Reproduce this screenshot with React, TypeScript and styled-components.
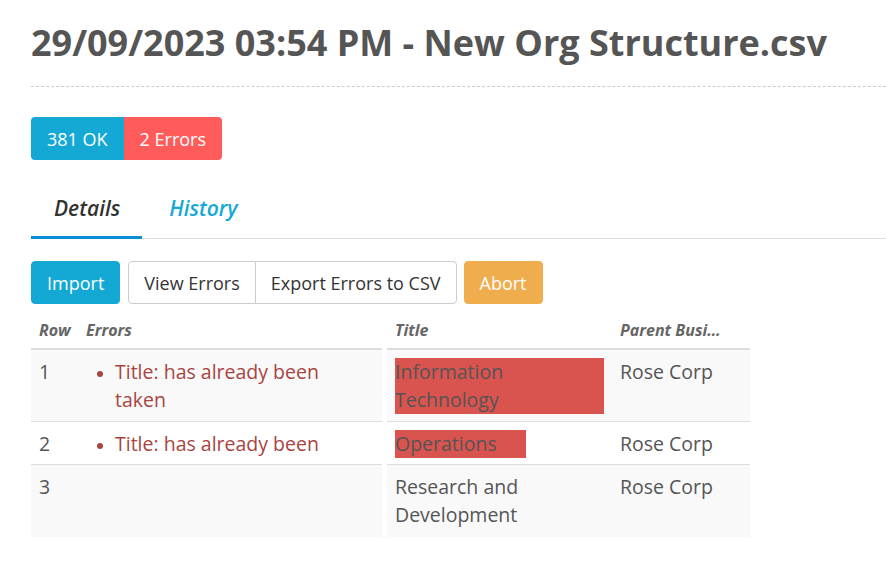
import React from "react";
import styled, { createGlobalStyle } from "styled-components";

const Global = createGlobalStyle`
  html, body { margin: 0; padding: 0; background: #fff; }
  body { font-family: "Open Sans", "Liberation Sans", sans-serif; color: #555; }
  * { box-sizing: border-box; }
`;

const Page = styled.div`
  padding-left: 31px;
  width: 886px;
  overflow: hidden;
`;

const Header = styled.div`
  padding-top: 21px;
  padding-bottom: 21px;
  border-bottom: 1px dashed #ccc;
`;

const Title = styled.h1`
  margin: 0;
  font-size: 36px;
  line-height: 44px;
  font-weight: 700;
  color: #555;
  white-space: nowrap;
`;

const Badges = styled.div`
  display: flex;
  margin-top: 30px;
`;

const Badge = styled.span<{ $tone: "ok" | "err"; $first?: boolean }>`
  height: 43px;
  display: flex;
  align-items: center;
  padding: 0 16px;
  font-size: 18px;
  color: #fff;
  background: ${(p) => (p.$tone === "ok" ? "#14a9d5" : "#ff5b5b")};
  border-radius: ${(p) => (p.$first ? "4px 0 0 4px" : "0 4px 4px 0")};
`;

const Tabs = styled.div`
  display: flex;
  margin-top: 20px;
  border-bottom: 1px solid #ddd;
`;

const Tab = styled.div<{ $active?: boolean }>`
  height: 59px;
  display: flex;
  align-items: center;
  padding: 0 22px 0 23px;
  margin-right: 4px;
  font-size: 21px;
  font-weight: 600;
  font-style: italic;
  color: ${(p) => (p.$active ? "#333" : "#14a9d5")};
  border-bottom: 3px solid ${(p) => (p.$active ? "#0a8fd6" : "transparent")};
  margin-bottom: -1px;
`;

const Toolbar = styled.div`
  display: flex;
  gap: 8px;
  margin-top: 22px;
`;

const Btn = styled.button<{ $variant: "primary" | "default" | "warning" }>`
  height: 43px;
  padding: 0 15px;
  font-family: inherit;
  font-size: 18px;
  border-radius: 4px;
  cursor: pointer;
  border: 1px solid
    ${(p) =>
      p.$variant === "primary" ? "#14a9d5" : p.$variant === "warning" ? "#f0ad4e" : "#ccc"};
  background: ${(p) =>
    p.$variant === "primary" ? "#14a9d5" : p.$variant === "warning" ? "#f0ad4e" : "#fff"};
  color: ${(p) => (p.$variant === "default" ? "#333" : "#fff")};
`;

const Group = styled.div`
  display: flex;
  margin-right: -1px;
  & > ${Btn}:first-child { border-radius: 4px 0 0 4px; }
  & > ${Btn}:last-child { border-radius: 0 4px 4px 0; margin-left: -1px; }
`;

const Tables = styled.div`
  display: flex;
  gap: 5px;
  margin-top: 8px;
`;

const Table = styled.div<{ $width: number }>`
  width: ${(p) => p.$width}px;
  display: flex;
  flex-direction: column;
`;

const HeadRow = styled.div`
  display: flex;
  height: 38px;
  align-items: center;
  border-bottom: 2px solid #ddd;
`;

const Th = styled.div<{ $w?: number; $padRight?: number; $clip?: boolean }>`
  ${(p) => (p.$w ? `width: ${p.$w}px; flex: none;` : "flex: 1; min-width: 0;")}
  padding: 0 ${(p) => p.$padRight ?? 8}px 0 8px;
  font-size: 16px;
  font-weight: 700;
  font-style: italic;
  color: #666;
  white-space: nowrap;
  overflow: ${(p) => (p.$clip ? "hidden" : "visible")};
  text-overflow: ellipsis;
`;

const Row = styled.div<{ $h: number; $striped?: boolean; $last?: boolean }>`
  display: flex;
  height: ${(p) => p.$h}px;
  overflow: hidden;
  background: ${(p) => (p.$striped ? "#f9f9f9" : "#fff")};
  border-bottom: ${(p) => (p.$last ? "none" : "1px solid #ddd")};
`;

const Td = styled.div<{ $w?: number }>`
  ${(p) => (p.$w ? `width: ${p.$w}px; flex: none;` : "flex: 1;")}
  padding: 8px;
  font-size: 19.5px;
  line-height: 28px;
  color: #555;
`;

const ErrList = styled.ul`
  margin: 0;
  padding-left: 29px;
  color: #a94442;
  li::marker { font-size: 16px; }
`;

const Flag = styled.span`
  display: inline-block;
  max-width: 100%;
  padding-right: 29px;
  background: #d9534f;
  color: #555;
`;

const rows = [
  { n: 1, err: true, title: "Information Technology", flag: true, parent: "Rose Corp", h: 72 },
  { n: 2, err: true, title: "Operations", flag: true, parent: "Rose Corp", h: 43 },
  { n: 3, err: false, title: "Research and Development", flag: false, parent: "Rose Corp", h: 72 },
];

export default function App() {
  return (
    <>
      <Global />
      <Page>
        <Header>
          <Title>29/09/2023 03:54 PM - New Org Structure.csv</Title>
        </Header>
        <Badges>
          <Badge $tone="ok" $first>381 OK</Badge>
          <Badge $tone="err">2 Errors</Badge>
        </Badges>
        <Tabs>
          <Tab $active>Details</Tab>
          <Tab>History</Tab>
        </Tabs>
        <Toolbar>
          <Btn $variant="primary">Import</Btn>
          <Group>
            <Btn $variant="default">View Errors</Btn>
            <Btn $variant="default">Export Errors to CSV</Btn>
          </Group>
          <Btn $variant="warning">Abort</Btn>
        </Toolbar>
        <Tables>
          <Table $width={351}>
            <HeadRow>
              <Th $w={47}>Row</Th>
              <Th>Errors</Th>
            </HeadRow>
            {rows.map((r, i) => (
              <Row key={r.n} $h={r.h} $striped={i % 2 === 0} $last={i === rows.length - 1}>
                <Td $w={47}>{r.n}</Td>
                <Td>
                  {r.err && (
                    <ErrList>
                      <li>Title: has already been taken</li>
                    </ErrList>
                  )}
                </Td>
              </Row>
            ))}
          </Table>
          <Table $width={363}>
            <HeadRow>
              <Th $w={225}>Title</Th>
              <Th $padRight={26} $clip>Parent Business Unit</Th>
            </HeadRow>
            {rows.map((r, i) => (
              <Row key={r.n} $h={r.h} $striped={i % 2 === 0} $last={i === rows.length - 1}>
                <Td $w={225}>{r.flag ? <Flag>{r.title}</Flag> : r.title}</Td>
                <Td>{r.parent}</Td>
              </Row>
            ))}
          </Table>
        </Tables>
      </Page>
    </>
  );
}
